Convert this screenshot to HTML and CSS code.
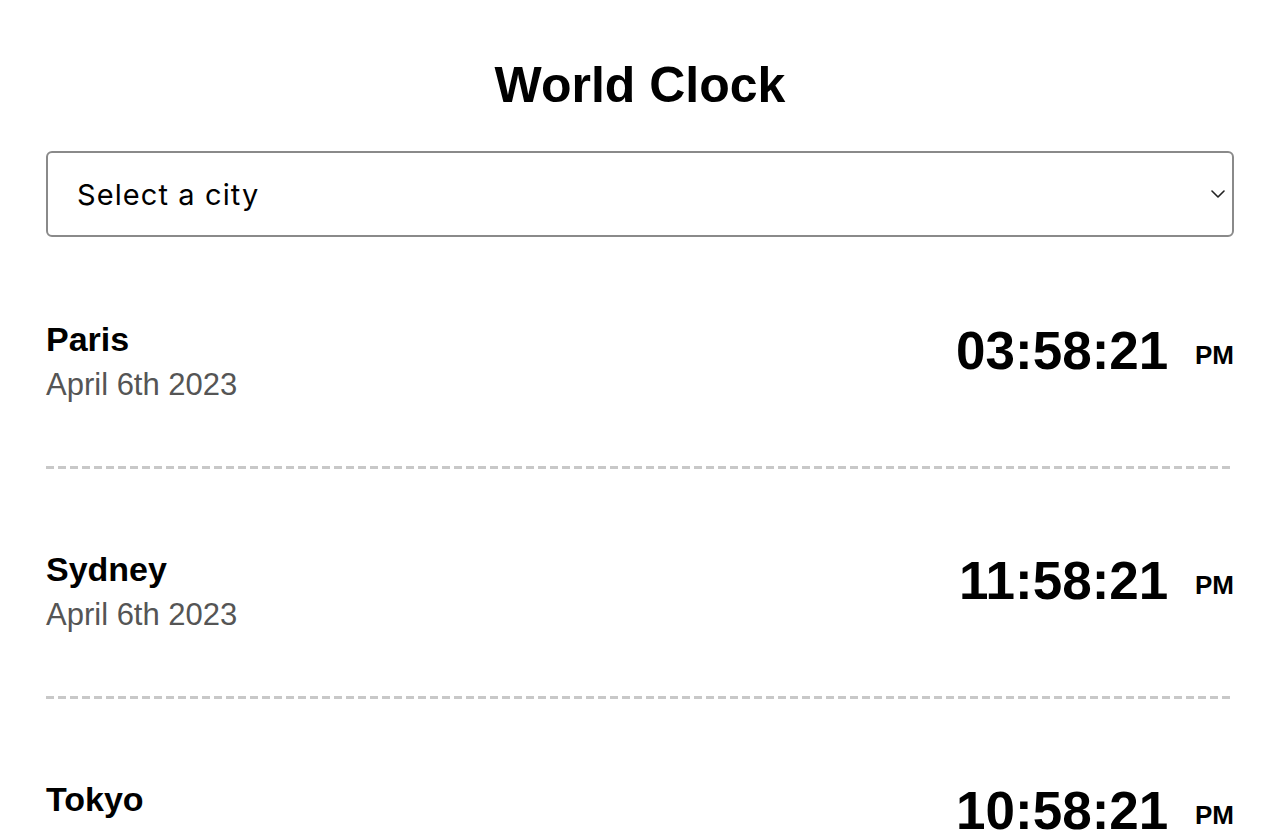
FILE: index.html
```html
<!DOCTYPE html>
<html lang="en">
<head>
<meta charset="utf-8">
<title>World Clock</title>
<link rel="stylesheet" href="styles.css">
</head>
<body>
<div class="app">
  <h1 class="title">World Clock</h1>
  <div class="select-wrap">
    <select class="city-select">
      <option>Select a city</option>
      <option>Paris</option>
      <option>Sydney</option>
      <option>Tokyo</option>
    </select>
    <svg class="chevron" width="14" height="8" viewBox="0 0 14 8" aria-hidden="true">
      <path d="M1 1 L7 7 L13 1" fill="none" stroke="#222" stroke-width="1.6" stroke-linecap="round" stroke-linejoin="round"/>
    </svg>
  </div>
  <div class="clock-list">
    <div class="clock-row">
      <div class="city">
        <div class="city-name">Paris</div>
        <div class="city-date">April 6th 2023</div>
      </div>
      <div class="city-time">03:58:21 <small class="ampm">PM</small></div>
    </div>
    <div class="clock-row">
      <div class="city">
        <div class="city-name">Sydney</div>
        <div class="city-date">April 6th 2023</div>
      </div>
      <div class="city-time">11:58:21 <small class="ampm">PM</small></div>
    </div>
    <div class="clock-row">
      <div class="city">
        <div class="city-name">Tokyo</div>
        <div class="city-date">April 6th 2023</div>
      </div>
      <div class="city-time">10:58:21 <small class="ampm">PM</small></div>
    </div>
  </div>
</div>
</body>
</html>
```

FILE: styles.css
```css
html, body {
  margin: 0;
  padding: 0;
  background: #fff;
}

body {
  font-family: "Liberation Sans", Arial, Helvetica, sans-serif;
  color: #000;
}

.app {
  max-width: 1188px;
  margin: 0 auto;
  padding-top: 56px;
}

.title {
  margin: 0;
  text-align: center;
  font-size: 50px;
  line-height: 58px;
  font-weight: 700;
}

.select-wrap {
  position: relative;
  margin-top: 37px;
}

.city-select {
  appearance: none;
  -webkit-appearance: none;
  display: block;
  width: 100%;
  height: 86px;
  box-sizing: border-box;
  padding: 0 60px 0 29px;
  border: 2px solid #8a8a8a;
  border-radius: 6px;
  background: #fff;
  color: #000;
  font-family: Inter, "Liberation Sans", Arial, sans-serif;
  font-size: 29px;
  letter-spacing: 1.1px;
  outline: none;
}

.chevron {
  position: absolute;
  right: 9px;
  top: 39px;
  pointer-events: none;
}

.clock-list {
  margin-top: 2px;
}

.clock-row {
  display: flex;
  justify-content: space-between;
  align-items: flex-start;
  padding: 80px 0 66px;
  background-image: repeating-linear-gradient(to right, #c8c8c8 0 8px, transparent 8px 12px);
  background-size: 100% 3px;
  background-position: left bottom;
  background-repeat: no-repeat;
}

.city-name {
  font-size: 34px;
  line-height: 40px;
  font-weight: 700;
}

.city-date {
  margin-top: 8px;
  font-size: 31px;
  line-height: 36px;
  color: #555;
}

.city-time {
  margin-top: 5px;
  font-size: 53px;
  line-height: 53px;
  font-weight: 700;
  white-space: nowrap;
}

.ampm {
  margin-left: 12px;
  font-size: 26px;
  font-weight: 700;
  vertical-align: 5px;
}
```
